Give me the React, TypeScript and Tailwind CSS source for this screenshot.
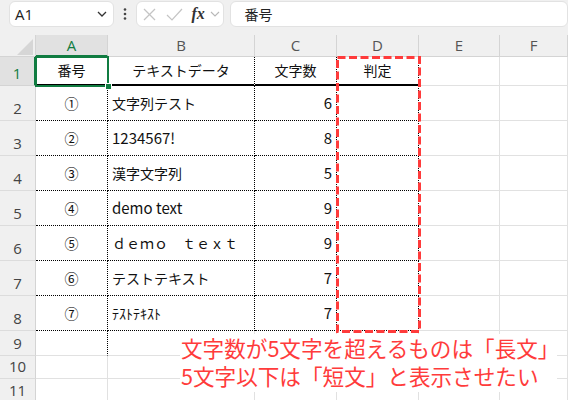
import React from "react";

const COLS = ["A", "B", "C", "D", "E", "F"];
const ROW_H = [29, 35, 35, 35, 35, 35, 35, 35, 25, 23, 24];

const DATA: string[][] = [
  ["番号", "テキストデータ", "文字数", "判定"],
  ["①", "文字列テスト", "6", ""],
  ["②", "1234567!", "8", ""],
  ["③", "漢字文字列", "5", ""],
  ["④", "demo text", "9", ""],
  ["⑤", "ｄｅｍｏ　ｔｅｘｔ", "9", ""],
  ["⑥", "テストテキスト", "7", ""],
  ["⑦", "ﾃｽﾄﾃｷｽﾄ", "7", ""],
];

function isLatin(s: string): boolean {
  return /^[\x20-\x7e]+$/.test(s);
}

function cellClass(r: number, c: number, text: string): string {
  const inTable = r <= 8 && c <= 3;
  const parts: string[] = ["box-border flex items-center px-[4px] text-[#111] whitespace-nowrap overflow-hidden"];
  parts.push(isLatin(text) ? "text-[15px]" : "text-[14px]");
  if (inTable || (r === 9 && c === 0)) parts.push("[border-right:1px_dotted_#000]");
  else parts.push("[border-right:1px_solid_#e1e1e1]");
  if (inTable && r === 1) parts.push("[border-bottom:2px_solid_#000]");
  else if (inTable) parts.push("[border-bottom:1px_dotted_#000]");
  else parts.push("[border-bottom:1px_solid_#e1e1e1]");
  if (r === 1 || c === 0 || c === 3) parts.push("justify-center");
  else if (c === 2) parts.push("justify-end");
  else parts.push("justify-start");
  return parts.join(" ");
}

export default function App() {
  return (
    <div className="relative w-[568px] h-[400px] overflow-hidden bg-white font-['Noto_Sans_CJK_JP',sans-serif]">
      {/* formula bar */}
      <div className="h-[35px] bg-[#f0f0f0] flex items-start pt-[1px]">
        <div className="ml-[9px] w-[107px] h-[26px] bg-white border border-[#e2e2e2] rounded-[6px] flex items-center justify-between pl-[5px] pr-[6px]">
          <span className="text-[15px] text-[#222] font-['Open_Sans',sans-serif] leading-none">A1</span>
          <svg width="10" height="6" viewBox="0 0 10 6">
            <polyline points="1,1 5,5 9,1" fill="none" stroke="#333" strokeWidth="1.3" />
          </svg>
        </div>
        <div className="w-[23px] h-[26px] flex items-center justify-center">
          <svg width="4" height="12" viewBox="0 0 4 12">
            <circle cx="2" cy="1.5" r="1.3" fill="#444" />
            <circle cx="2" cy="6" r="1.3" fill="#444" />
            <circle cx="2" cy="10.5" r="1.3" fill="#444" />
          </svg>
        </div>
        <div className="w-[90px] h-[26px] bg-white border border-[#e2e2e2] rounded-[6px] flex items-center">
          <svg className="ml-[6px]" width="13" height="13" viewBox="0 0 13 13">
            <line x1="1" y1="1" x2="12" y2="12" stroke="#c4c4c4" strokeWidth="1.2" />
            <line x1="12" y1="1" x2="1" y2="12" stroke="#c4c4c4" strokeWidth="1.2" />
          </svg>
          <svg className="ml-[10px]" width="17" height="13" viewBox="0 0 17 13">
            <polyline points="1,7 6,12 16,1" fill="none" stroke="#c4c4c4" strokeWidth="1.2" />
          </svg>
          <span className="ml-[8px] text-[16px] italic font-bold text-[#333] font-['Liberation_Serif',serif] leading-none">fx</span>
          <svg className="ml-[5px]" width="10" height="6" viewBox="0 0 10 6">
            <polyline points="1,1 5,5 9,1" fill="none" stroke="#b8b8b8" strokeWidth="1.1" />
          </svg>
        </div>
        <div className="ml-[6px] w-[345px] h-[26px] bg-white border border-[#e2e2e2] rounded-[6px] flex items-center pl-[13px]">
          <span className="text-[14px] text-[#222]">番号</span>
        </div>
      </div>

      {/* sheet */}
      <div className="grid grid-cols-[36px_72px_147px_82px_82px_81px_68px] grid-rows-[22px_29px_35px_35px_35px_35px_35px_35px_35px_25px_23px_24px]">
        {/* header row */}
        <div className="box-border bg-[#f0f0f0] [border-right:1px_solid_#d4d4d4] [border-bottom:1px_solid_#d4d4d4] relative">
          <svg className="absolute left-0 top-0" width="36" height="22" viewBox="0 0 36 22">
            <polygon points="17,20 33,20 33,4" fill="#d6d6d6" />
          </svg>
        </div>
        {COLS.map((c, i) => (
          <div
            key={c}
            className={
              i === 0
                ? "box-border bg-[#e1e1e1] flex items-center justify-center text-[15px] text-[#107c41] font-['Open_Sans',sans-serif] [border-right:1px_solid_#d4d4d4] [border-bottom:2px_solid_#107c41]"
                : "box-border bg-[#f0f0f0] flex items-center justify-center text-[15px] text-[#555] font-['Open_Sans',sans-serif] [border-right:1px_solid_#d4d4d4] [border-bottom:1px_solid_#d4d4d4]"
            }
          >
            {c}
          </div>
        ))}

        {ROW_H.map((_, ri) => {
          const r = ri + 1;
          return (
            <React.Fragment key={r}>
              <div
                className={
                  r === 1
                    ? "box-border bg-[#e1e1e1] flex items-end justify-center pb-[3px] text-[15px] leading-[18px] text-[#107c41] font-['Open_Sans',sans-serif] [border-right:2px_solid_#107c41] [border-bottom:1px_solid_#d4d4d4]"
                    : "box-border bg-[#f0f0f0] flex items-end justify-center pb-[3px] text-[15px] leading-[18px] text-[#444] font-['Open_Sans',sans-serif] [border-right:1px_solid_#d4d4d4] [border-bottom:1px_solid_#dcdcdc]"
                }
              >
                {r}
              </div>
              {COLS.map((_, c) => {
                const t = r <= 8 && c <= 3 ? DATA[r - 1][c] : "";
                return (
                  <div key={c} className={cellClass(r, c, t)}>
                    {t}
                  </div>
                );
              })}
            </React.Fragment>
          );
        })}
      </div>

      {/* A1 selection */}
      <div className="absolute left-[35px] top-[56px] w-[74px] h-[31px] border-2 border-[#107c41] pointer-events-none" />
      <div className="absolute left-[105px] top-[83px] w-[7px] h-[7px] bg-[#107c41] border border-white" />

      {/* red dashed box around D */}
      <svg className="absolute left-[336px] top-[56px]" width="85" height="277" viewBox="0 0 85 277">
        <rect x="1.5" y="1.5" width="82" height="274" fill="none" stroke="#ff3b3b" strokeWidth="3" strokeDasharray="8 3.5" />
      </svg>

      {/* annotation */}
      <div className="absolute left-[180px] top-[334px] w-[377px] h-[58px] bg-white pl-[1px] text-[21.6px] leading-[28px] text-[#ff3b3b] whitespace-nowrap">
        <div>文字数が5文字を超えるものは「長文」</div>
        <div>5文字以下は「短文」と表示させたい</div>
      </div>
    </div>
  );
}
